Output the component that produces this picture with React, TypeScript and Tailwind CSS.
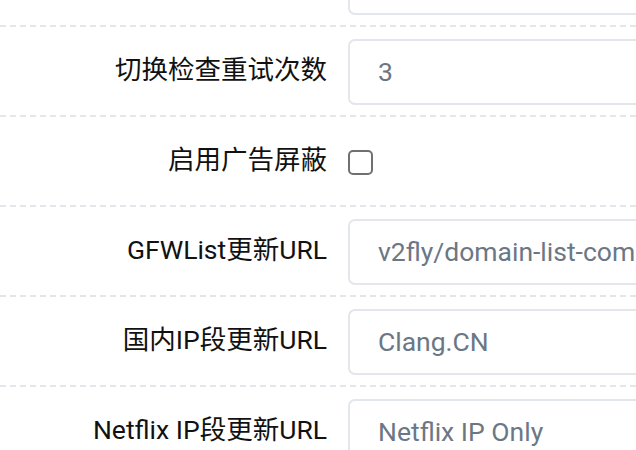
import React from "react";

const rows: { label: string; kind: "input" | "checkbox"; value?: string }[] = [
  { label: "切换检查重试次数", kind: "input", value: "3" },
  { label: "启用广告屏蔽", kind: "checkbox" },
  { label: "GFWList更新URL", kind: "input", value: "v2fly/domain-list-community" },
  { label: "国内IP段更新URL", kind: "input", value: "Clang.CN" },
  { label: "Netflix IP段更新URL", kind: "input", value: "Netflix IP Only" },
];

function Row({ label, kind, value }: { label: string; kind: "input" | "checkbox"; value?: string }) {
  return (
    <div className="flex items-center gap-[21px] pt-[12px] pb-[10px] border-b-2 border-dashed border-[#e3e6ea]">
      <div className="w-[327px] shrink-0 text-right text-[26.5px] leading-none text-[#111] -mt-[3px]">{label}</div>
      {kind === "input" ? (
        <div className="h-[66px] w-[420px] shrink-0 flex items-center rounded-[7px] border-2 border-[#e3e7eb] pl-[28px] text-[26.5px] text-[#6b7785] whitespace-nowrap overflow-hidden">
          {value}
        </div>
      ) : (
        <div className="h-[66px] flex items-center">
          <div className="w-[25px] h-[25px] rounded-[5px] border-2 border-[#707070] bg-white" />
        </div>
      )}
    </div>
  );
}

export default function App() {
  return (
    <div
      className="w-[636px] h-[450px] overflow-hidden bg-white"
      style={{ fontFamily: 'Roboto, "Noto Sans CJK SC", sans-serif' }}
    >
      <div className="-mt-[63px]">
        <Row label="" kind="input" value="" />
        {rows.map((r) => (
          <Row key={r.label} {...r} />
        ))}
      </div>
    </div>
  );
}
